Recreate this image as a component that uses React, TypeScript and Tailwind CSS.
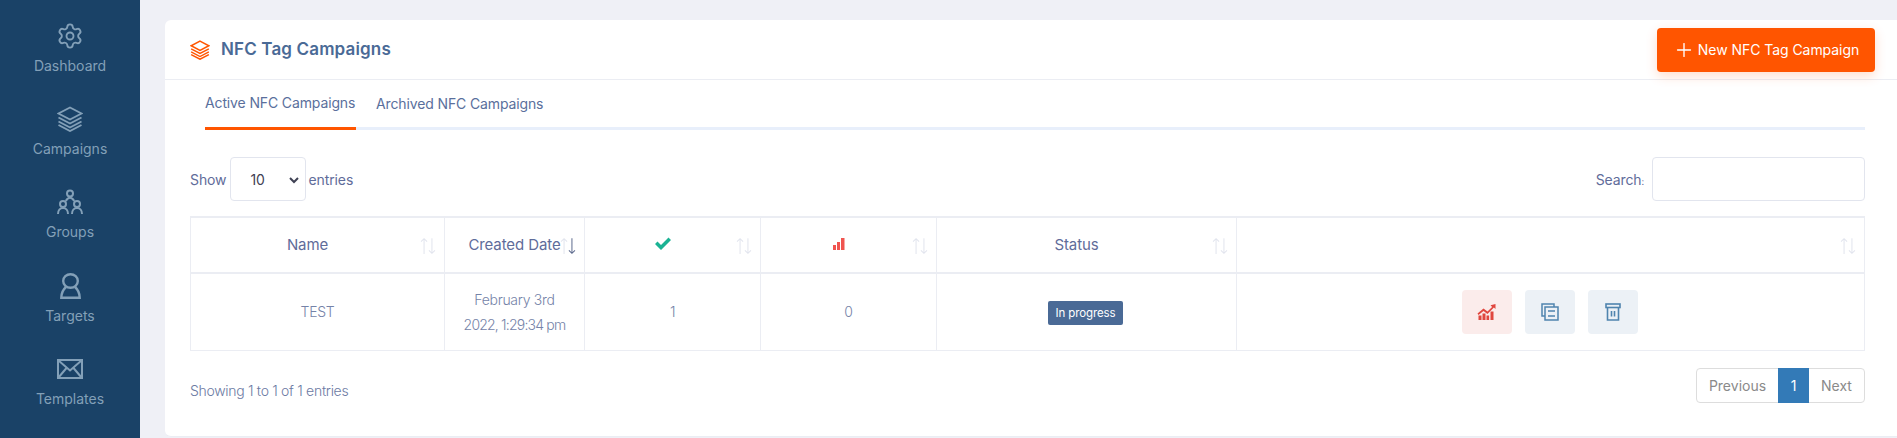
import React from "react";
import { Settings, Plus } from "lucide-react";

const Layers = ({ className }: { className?: string }) => (
  <svg viewBox="0 0 26 26" className={className} fill="none" stroke="currentColor" strokeWidth="1.9" strokeLinejoin="miter">
    <path d="M13 1.5 24.5 7.5 13 13.5 1.5 7.5Z" />
    <path d="M1.5 11.5 13 17.5 24.5 11.5" />
    <path d="M1.5 15.5 13 21.5 24.5 15.5" />
    <path d="M1.5 19 13 25 24.5 19" />
  </svg>
);

const Groups = () => (
  <svg viewBox="0 0 26 26" className="w-[26px] h-[26px]" fill="none" stroke="currentColor" strokeWidth="2">
    <circle cx="13" cy="4.5" r="3" />
    <path d="M8.8 12c.9-1.6 2.4-3.2 4.2-3.2s3.3 1.6 4.2 3.2" />
    <circle cx="6" cy="15" r="3" />
    <circle cx="20" cy="15" r="3" />
    <path d="M1 25c0-3.4 2-6 5-6s5 2.6 5 6" />
    <path d="M15 25c0-3.4 2-6 5-6s5 2.6 5 6" />
  </svg>
);

const Target = () => (
  <svg viewBox="0 0 21 26" className="w-[21px] h-[26px]" fill="none" stroke="currentColor" strokeWidth="2.4">
    <ellipse cx="10.5" cy="8" rx="7.3" ry="6.8" />
    <path d="M6 14C3.2 16.5 1.4 20 1.3 24.7h18.4C19.6 20 17.8 16.5 15 14" />
  </svg>
);

const Mail = () => (
  <svg viewBox="0 0 26 20" className="w-[26px] h-[20px]" fill="none" stroke="currentColor" strokeWidth="2">
    <rect x="1" y="1" width="24" height="18" />
    <path d="M1.5 1.5 13 11.5 24.5 1.5M1.5 18.5 9.5 9M24.5 18.5 16.5 9" />
  </svg>
);

const Sort = ({ active }: { active?: boolean }) => (
  <svg viewBox="0 0 16 16" className="w-[18px] h-[18px]" fill="none" strokeWidth="0.9">
    <path d="M4.5 15V1.5M1.8 4.2 4.5 1.5 7.2 4.2" stroke="#e2e5ee" />
    <path d="M11.5 1v13.5M8.8 11.8l2.7 2.7 2.7-2.7" stroke={active ? "#5f6c8f" : "#e2e5ee"} />
  </svg>
);

const nav = [
  { label: "Dashboard", icon: <Settings className="w-[28px] h-[28px]" strokeWidth={1.6} /> },
  { label: "Campaigns", icon: <Layers className="w-[26px] h-[26px]" /> },
  { label: "Groups", icon: <Groups /> },
  { label: "Targets", icon: <Target /> },
  { label: "Templates", icon: <Mail /> },
];

const Th = ({ children, active, center }: { children?: React.ReactNode; active?: boolean; center?: boolean }) => (
  <th className={`relative border border-[#ebedf3] border-t-2 border-b-2 font-normal text-[15px] tracking-[-0.1px] text-[#5f6c9a] text-center align-middle ${center ? "pr-0" : "pr-[20px]"}`}>
    {children}
    <span className="absolute right-[7px] top-[19px]">
      <Sort active={active} />
    </span>
  </th>
);

const Td = ({ children }: { children?: React.ReactNode }) => (
  <td className="border border-[#ebedf3] text-center align-middle text-[14px] tracking-[-0.3px] leading-[25px] text-[#7583a8] font-light">{children}</td>
);

export default function App() {
  return (
    <div className="flex h-[438px] overflow-hidden bg-[#eff0f6] font-['Inter',sans-serif]">
      <aside className="w-[140px] shrink-0 bg-[#1a4267] text-[#83a0b8] flex flex-col pt-[22px]">
        {nav.map((n) => (
          <div key={n.label} className="h-[84px] flex flex-col items-center">
            <div className="h-[28px] flex items-center justify-center">{n.icon}</div>
            <div className="text-[14px] leading-[20px] mt-[6px]">{n.label}</div>
          </div>
        ))}
      </aside>
      <main className="flex-1 pl-[25px] pt-[20px]">
        <section className="bg-white rounded-l-[6px] h-[417px] border-b border-[#ebedf3]">
          <header className="h-[60px] border-b border-[#ebedf3] flex items-center justify-between pl-[25px] pr-[22px]">
            <div className="flex items-center gap-[11px]">
              <Layers className="w-[20px] h-[20px] text-[#ff5500]" />
              <h1 className="text-[17px] font-semibold text-[#4a6a96] tracking-[0.15px]">NFC Tag Campaigns</h1>
            </div>
            <button className="w-[218px] h-[44px] rounded-[4px] bg-[#ff5500] text-white text-[14px] tracking-[-0.05px] flex items-center justify-center gap-[3px] shadow-[0_4px_12px_rgba(255,85,0,0.2)]">
              <Plus className="w-[22px] h-[22px]" strokeWidth={1.5} />
              New NFC Tag Campaign
            </button>
          </header>
          <div className="pl-[25px] pr-[32px]">
            <nav className="ml-[15px] h-[50px] flex gap-[20px] border-b-[3px] border-[#e8effb] text-[14px] tracking-[-0.13px] text-[#5a6f9c] whitespace-nowrap">
              <div className="h-[50px] w-[151px] flex items-center border-b-[3px] border-[#ff5500] pb-[3px]">Active NFC Campaigns</div>
              <div className="h-[47px] flex items-center">Archived NFC Campaigns</div>
            </nav>
            <div className="mt-[27px] flex items-center justify-between text-[14px] tracking-[-0.1px] text-[#5f6c9a]">
              <div className="flex items-center">
                <span>Show</span>
                <div className="relative ml-[4px] mr-[2px] w-[76px] h-[44px] border border-[#e2e5ee] rounded-[4px] flex items-center pl-[19px] text-[#3f4254]">
                  10
                  <svg viewBox="0 0 12 12" className="absolute right-[5px] top-[16px] w-[12px] h-[12px]" fill="none" stroke="#3f4254" strokeWidth="2"><path d="M2 4l4 4 4-4" /></svg>
                </div>
                <span>entries</span>
              </div>
              <div className="flex items-center gap-[8px]">
                <span>Search<span className="text-[9px]">:</span></span>
                <div className="w-[213px] h-[44px] border border-[#e2e5ee] rounded-[4px]" />
              </div>
            </div>
            <table className="mt-[15px] w-full table-fixed border-collapse">
              <colgroup>
                <col className="w-[254px]" />
                <col className="w-[140px]" />
                <col className="w-[176px]" />
                <col className="w-[176px]" />
                <col className="w-[300px]" />
                <col />
              </colgroup>
              <thead>
                <tr className="h-[56px]">
                  <Th>Name</Th>
                  <Th active center>Created Date</Th>
                  <Th>
                    <svg viewBox="0 0 18 14" className="inline-block w-[18px] h-[15px] -translate-y-[2px] fill-[#1bb394]"><path d="M1 7.5 3.5 5 7 8.5 14.5 1 17 3.5 7 13.5Z" /></svg>
                  </Th>
                  <Th>
                    <svg viewBox="0 0 12 12" className="inline-block w-[12px] h-[14px] -translate-y-[2px] fill-[#f0544f]"><rect x="0" y="7" width="3" height="5" /><rect x="4" y="4" width="3" height="8" /><rect x="8" y="0" width="3.5" height="12" /></svg>
                  </Th>
                  <Th>Status</Th>
                  <Th />
                </tr>
              </thead>
              <tbody>
                <tr className="h-[77px]">
                  <Td>TEST</Td>
                  <Td>February 3rd<br /><span className="tracking-[-0.8px]">2022, 1:29:34 pm</span></Td>
                  <Td>1</Td>
                  <Td>0</Td>
                  <Td>
                    <span className="inline-block -translate-x-[1px] bg-[#4a6a96] text-white text-[11.5px] tracking-[-0.1px] leading-[24px] h-[24px] w-[75px] rounded-[2px] font-normal">In progress</span>
                  </Td>
                  <Td>
                    <div className="flex justify-center gap-[13px] pr-[2px]">
                      <button className="w-[50px] h-[44px] rounded-[4px] bg-[#fbeceb] flex items-center justify-center">
                        <svg viewBox="0 0 18 16" className="w-[19px] h-[16px]" fill="#e0473f"><path d="M0 9.5 6 4.5l4 3 4.6-4.6L13 1.2 18 0v5l-1.6-1.6L10 10 6 7 1 11Z" /><rect x="1" y="11.5" width="3" height="4.5" /><rect x="5" y="9.5" width="3" height="6.5" /><rect x="9" y="11.5" width="2.6" height="4.5" /><rect x="13" y="7.5" width="3" height="8.5" /></svg>
                      </button>
                      <button className="w-[50px] h-[44px] rounded-[4px] bg-[#ecf1f6] flex items-center justify-center">
                        <svg viewBox="0 0 18 18" className="w-[18px] h-[18px]" fill="none" stroke="#4f84ae" strokeWidth="1.5"><path d="M4 13H1V1h12v3" /><rect x="4" y="4" width="13" height="13" /><path d="M7 8h7M7 13h7" /></svg>
                      </button>
                      <button className="w-[50px] h-[44px] rounded-[4px] bg-[#ecf1f6] flex items-center justify-center">
                        <svg viewBox="0 0 16 18" className="w-[16px] h-[18px]" fill="none" stroke="#4f84ae" strokeWidth="1.6"><rect x="1" y="1" width="14" height="3.5" /><path d="M2.5 4.5V17h11V4.5M6.5 8v5.5M9.5 8v5.5" /></svg>
                      </button>
                    </div>
                  </Td>
                </tr>
              </tbody>
            </table>
            <div className="mt-[17px] flex items-center justify-between">
              <span className="text-[14px] tracking-[-0.3px] font-light text-[#6c7aa3] pt-[10px]">Showing 1 to 1 of 1 entries</span>
              <div className="flex h-[35px] border border-[#dddddd] rounded-[4px] text-[14px] text-[#8a8a8a] items-center">
                <span className="w-[81px] text-center">Previous</span>
                <span className="w-[31px] h-[35px] flex items-center justify-center bg-[#337ab7] text-white">1</span>
                <span className="w-[55px] text-center">Next</span>
              </div>
            </div>
          </div>
        </section>
      </main>
    </div>
  );
}
